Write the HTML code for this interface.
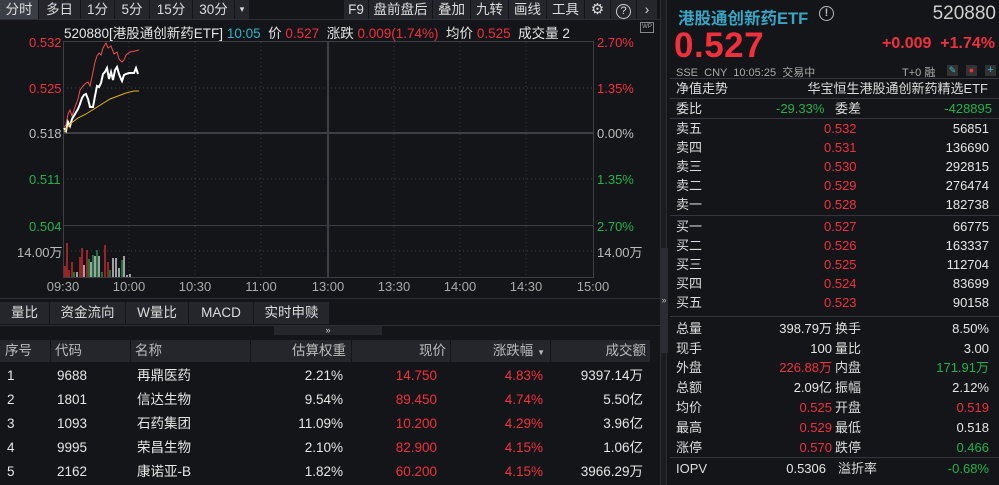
<!DOCTYPE html><html><head><meta charset="utf-8"><style>
*{margin:0;padding:0;box-sizing:border-box}
body{width:999px;height:485px;background:#141519;font-family:"Liberation Sans","Noto Sans CJK SC",sans-serif;color:#d8d8d8;position:relative;overflow:hidden;font-size:12px}
.a{position:absolute;white-space:nowrap}
.r{color:#f0313d}.g{color:#22b14c}.w{color:#e6e6e6}.gr{color:#9a9a9a}.c{color:#2bb5c8}
.tab{position:absolute;top:0;height:19px;background:#24262b;color:#ddd;font-size:13.5px;line-height:19px;text-align:center;border-right:1px solid #141519}
.bt{position:absolute;top:302px;height:22px;background:#24262b;color:#ddd;font-size:13.5px;line-height:22px;text-align:center;border-right:1px solid #141519}
.row{position:absolute;left:0;width:655px;height:24px;font-size:13.5px;line-height:24px}
.row span{position:absolute}
.wr{position:absolute;left:0;top:0;width:999px;height:485px;font-size:13px}
.wr .a{line-height:18px}
.sep{position:absolute;top:340px;width:1px;height:22px;background:#141519}
</style></head><body>
<div class="tab" style="left:0;width:39px;background:#3b3e45">分时</div>
<div class="tab" style="left:39px;width:42px">多日</div>
<div class="tab" style="left:81px;width:34px">1分</div>
<div class="tab" style="left:115px;width:35px">5分</div>
<div class="tab" style="left:150px;width:43px">15分</div>
<div class="tab" style="left:193px;width:42px">30分</div>
<div class="tab" style="left:235px;width:15px;font-size:9px">▾</div>
<div class="tab" style="left:344px;width:25px">F9</div>
<div class="tab" style="left:369px;width:64px">盘前盘后</div>
<div class="tab" style="left:433px;width:38px">叠加</div>
<div class="tab" style="left:471px;width:38px">九转</div>
<div class="tab" style="left:509px;width:38px">画线</div>
<div class="tab" style="left:547px;width:38px">工具</div>
<div class="tab" style="left:585px;width:26px;font-size:15px">⚙</div>
<div class="tab" style="left:611px;width:26px"><span style="display:inline-block;width:15px;height:15px;border:1.5px solid #ccc;border-radius:50%;font-size:11px;line-height:12px;margin-top:2px">?</span></div>
<div class="tab" style="left:637px;width:21px">›</div>
<div class="a" style="left:0;top:19px;width:660px;height:1px;background:#2c2e33"></div>
<div class="a" style="left:64px;top:22px;font-size:13.5px"><span class="w">520880[港股通创新药ETF]</span> <span class="c">10:05</span> &nbsp;<span class="w">价</span> <span class="r">0.527</span> &nbsp;<span class="w">涨跌</span> <span class="r">0.009(1.74%)</span> &nbsp;<span class="w">均价</span> <span class="r">0.525</span> &nbsp;<span class="w">成交量</span> <span class="w">2</span></div>
<div class="a" style="left:640px;top:22px;width:14px;height:11px;border:1px solid #888;font-size:6px;line-height:9px;text-align:center;color:#aaa">WP</div>
<svg class="a" style="left:0;top:0" width="660" height="300">
<g stroke="#3a3c42" stroke-dasharray="1,3" stroke-width="1">
<line x1="63" y1="88" x2="593" y2="88"/><line x1="63" y1="179" x2="593" y2="179"/><line x1="63" y1="251" x2="593" y2="251"/>
<line x1="129" y1="42" x2="129" y2="277"/><line x1="195" y1="42" x2="195" y2="277"/><line x1="261" y1="42" x2="261" y2="277"/>
<line x1="394" y1="42" x2="394" y2="277"/><line x1="460" y1="42" x2="460" y2="277"/><line x1="526" y1="42" x2="526" y2="277"/>
</g>
<g stroke="#3d3f45" stroke-width="1" fill="none">
<rect x="63.5" y="41.5" width="530" height="236"/>
<line x1="63" y1="133" x2="593" y2="133" stroke-width="2"/>
<line x1="63" y1="225.5" x2="593" y2="225.5"/>
<line x1="328" y1="42" x2="328" y2="277" stroke-width="2"/>
</g>
<polyline fill="none" stroke="#f04d4d" stroke-width="1" points="64,127 66,125 68,114 70,110 72,116 75,107 78,99 80,90 83,86 86,83 88,82 90,86 93,72 95,62 97,56 99,53 101,55 103,48 106,43 108,48 111,46 114,54 117,52 119,59 122,62 124,60 126,55 130,52 135,51 139,50"/>
<polyline fill="none" stroke="#fff" stroke-width="2" points="64,128 66,131 68,122 70,126 72,119 75,114 78,109 80,104 82,98 84,95 86,94 88,99 90,107 93,107 95,96 97,86 99,87 101,83 103,74 105,72 107,68 109,79 111,72 113,80 115,70 117,67 119,74 121,79 122,81 124,75 126,74 129,73 134,73 136,68 138,74"/>
<polyline fill="none" stroke="#e8b020" stroke-width="1" points="64,132 70,124 78,118 86,114 94,109 102,104 110,99 118,96 126,93 134,91 139,91"/>
<g stroke-width="1.2">
<line x1="65" y1="277" x2="65" y2="266" stroke="#f03030"/><line x1="67" y1="277" x2="67" y2="243" stroke="#f03030"/><line x1="69" y1="277" x2="69" y2="270" stroke="#f03030"/><line x1="72" y1="277" x2="72" y2="262" stroke="#f03030"/><line x1="74" y1="277" x2="74" y2="272" stroke="#22b14c"/><line x1="77" y1="277" x2="77" y2="272" stroke="#fff"/><line x1="80" y1="277" x2="80" y2="257" stroke="#f03030"/><line x1="82" y1="277" x2="82" y2="248" stroke="#f03030"/><line x1="84" y1="277" x2="84" y2="265" stroke="#fff"/><line x1="87" y1="277" x2="87" y2="250" stroke="#f03030"/><line x1="89" y1="277" x2="89" y2="259" stroke="#22b14c"/><line x1="91" y1="277" x2="91" y2="262" stroke="#fff"/><line x1="93" y1="277" x2="93" y2="255" stroke="#22b14c"/><line x1="95" y1="277" x2="95" y2="256" stroke="#fff"/><line x1="97" y1="277" x2="97" y2="250" stroke="#22b14c"/><line x1="99" y1="277" x2="99" y2="256" stroke="#fff"/><line x1="102" y1="277" x2="102" y2="272" stroke="#22b14c"/><line x1="105" y1="277" x2="105" y2="245" stroke="#f03030"/><line x1="108" y1="277" x2="108" y2="262" stroke="#f03030"/><line x1="110" y1="277" x2="110" y2="270" stroke="#22b14c"/><line x1="113" y1="277" x2="113" y2="258" stroke="#fff"/><line x1="116" y1="277" x2="116" y2="258" stroke="#fff"/><line x1="119" y1="277" x2="119" y2="268" stroke="#fff"/><line x1="122" y1="277" x2="122" y2="260" stroke="#22b14c"/><line x1="124" y1="277" x2="124" y2="256" stroke="#fff"/><line x1="127" y1="277" x2="127" y2="275" stroke="#fff"/><line x1="130" y1="277" x2="130" y2="274" stroke="#fff"/>
</g>
<g font-size="13" font-family="Liberation Sans, Noto Sans CJK SC, sans-serif">
<text x="29" y="47" fill="#f0313d">0.532</text><text x="29" y="93" fill="#f0313d">0.525</text><text x="29" y="138" fill="#bbb">0.518</text><text x="29" y="184" fill="#22b14c">0.511</text><text x="29" y="231" fill="#22b14c">0.504</text><text x="17" y="257" fill="#bbb">14.00万</text>
<text x="597" y="47" fill="#f0313d">2.70%</text><text x="597" y="93" fill="#f0313d">1.35%</text><text x="597" y="138" fill="#bbb">0.00%</text><text x="597" y="184" fill="#22b14c">1.35%</text><text x="597" y="231" fill="#22b14c">2.70%</text><text x="597" y="257" fill="#bbb">14.00万</text>
<g fill="#aaa" text-anchor="middle"><text x="63" y="291">09:30</text><text x="129" y="291">10:00</text><text x="195" y="291">10:30</text><text x="261" y="291">11:00</text><text x="328" y="291">13:00</text><text x="394" y="291">13:30</text><text x="460" y="291">14:00</text><text x="526" y="291">14:30</text><text x="593" y="291">15:00</text></g>
</g>
</svg>
<div class="a" style="left:0;top:298px;width:660px;height:1px;background:#2c2e33"></div>
<div class="bt" style="left:0;width:50px">量比</div>
<div class="bt" style="left:50px;width:76px">资金流向</div>
<div class="bt" style="left:126px;width:63px">W量比</div>
<div class="bt" style="left:189px;width:65px">MACD</div>
<div class="bt" style="left:254px;width:76px">实时申赎</div>
<div class="a" style="left:0;top:325px;width:660px;height:1px;background:#2c2e33"></div>
<div class="a" style="left:274px;top:326px;width:108px;height:9px;background:#24262b;color:#ccc;font-size:9px;line-height:9px;text-align:center">»</div>
<div class="row" style="top:340px;height:22px;width:650px;line-height:22px;background:#24262b;color:#bbb;font-size:13.5px">
<span style="left:5px">序号</span><span style="left:55px">代码</span><span style="left:135px">名称</span><span style="right:304px">估算权重</span><span style="right:204px">现价</span><span style="right:105px">涨跌幅 <span style="position:static;font-size:8px">▼</span></span><span style="right:4px">成交额</span>
</div>
<div class="sep" style="left:50px"></div><div class="sep" style="left:130px"></div><div class="sep" style="left:250px"></div><div class="sep" style="left:351px"></div><div class="sep" style="left:450px"></div><div class="sep" style="left:550px"></div>
<div class="row w" style="top:364px"><span style="left:7px">1</span><span style="left:57px">9688</span><span style="left:137px">再鼎医药</span><span style="right:312px">2.21%</span><span class="r" style="right:218px">14.750</span><span class="r" style="right:112px">4.83%</span><span style="right:12px">9397.14万</span></div>
<div class="row w" style="top:388px"><span style="left:7px">2</span><span style="left:57px">1801</span><span style="left:137px">信达生物</span><span style="right:312px">9.54%</span><span class="r" style="right:218px">89.450</span><span class="r" style="right:112px">4.74%</span><span style="right:12px">5.50亿</span></div>
<div class="row w" style="top:412px"><span style="left:7px">3</span><span style="left:57px">1093</span><span style="left:137px">石药集团</span><span style="right:312px">11.09%</span><span class="r" style="right:218px">10.200</span><span class="r" style="right:112px">4.29%</span><span style="right:12px">3.96亿</span></div>
<div class="row w" style="top:436px"><span style="left:7px">4</span><span style="left:57px">9995</span><span style="left:137px">荣昌生物</span><span style="right:312px">2.10%</span><span class="r" style="right:218px">82.900</span><span class="r" style="right:112px">4.15%</span><span style="right:12px">1.06亿</span></div>
<div class="row w" style="top:460px"><span style="left:7px">5</span><span style="left:57px">2162</span><span style="left:137px">康诺亚-B</span><span style="right:312px">1.82%</span><span class="r" style="right:218px">60.200</span><span class="r" style="right:112px">4.15%</span><span style="right:12px">3966.29万</span></div>
<div class="a" style="left:660px;top:0;width:7px;height:485px;background:#1b1c20;border-left:1px solid #2c2e33;border-right:1px solid #2c2e33"></div>
<div class="a" style="left:660px;top:248px;width:8px;height:105px;background:#2a2c31;color:#bbb;font-size:9px;line-height:105px;text-align:center">»</div>
<div class="a" style="left:678px;top:5px;font-size:16.5px;font-weight:bold;color:#37a6c4">港股通创新药ETF</div>
<div class="a" style="left:819px;top:6px;width:15px;height:15px;border:1.5px solid #bbb;border-radius:50%;font-size:11px;line-height:12px;text-align:center;color:#bbb;font-weight:bold">!</div>
<div class="a" style="right:3px;top:3px;font-size:19px;color:#cfcfcf">520880</div>
<div class="a" style="left:674px;top:26px;font-size:35px;font-weight:bold;color:#f0313d;letter-spacing:0.5px">0.527</div>
<div class="a r" style="right:4px;top:35px;font-size:16px;font-weight:bold">+0.009 &nbsp;+1.74%</div>
<div class="a gr" style="left:676px;top:64px;font-size:11px;color:#aaa">SSE &nbsp;CNY &nbsp;10:05:25 &nbsp;交易中</div>
<div class="a" style="left:902px;top:64px;font-size:11px;color:#aaa">T+0 融</div>
<div class="a" style="left:947px;top:65px;width:11px;height:11px;background:#333;color:#3fb6d6;font-size:9px;line-height:11px;text-align:center">✎</div>
<div class="a" style="left:966px;top:65px;width:11px;height:11px;background:#333;color:#f0313d;font-size:9px;line-height:11px;text-align:center">●</div>
<div class="a" style="left:985px;top:65px;width:11px;height:11px;background:#333;color:#3fb6d6;font-size:11px;line-height:11px;text-align:center">+</div>
<div class="a" style="left:670px;top:78px;width:329px;height:1px;background:#34363b"></div>
<div class="wr">
<div class="a" style="left:676px;top:80px;color:#ddd">净值走势</div>
<div class="a" style="right:11px;top:80px;color:#ddd">华宝恒生港股通创新药精选ETF</div>
<div class="a" style="left:676px;top:100px;color:#ddd">委比</div>
<div class="a g" style="left:776px;top:100px">-29.33%</div>
<div class="a" style="left:835px;top:100px;color:#ddd">委差</div>
<div class="a g" style="right:7px;top:100px">-428895</div>
</div>
<div class="a" style="left:670px;top:98px;width:329px;height:1px;background:#34363b"></div>
<div class="a" style="left:670px;top:118px;width:329px;height:1px;background:#34363b"></div>
<div class="wr">
<div class="a" style="left:676px;top:120px;color:#ddd">卖五</div><div class="a r" style="left:824px;top:120px">0.532</div><div class="a w" style="right:10px;top:120px">56851</div>
<div class="a" style="left:676px;top:139px;color:#ddd">卖四</div><div class="a r" style="left:824px;top:139px">0.531</div><div class="a w" style="right:10px;top:139px">136690</div>
<div class="a" style="left:676px;top:158px;color:#ddd">卖三</div><div class="a r" style="left:824px;top:158px">0.530</div><div class="a w" style="right:10px;top:158px">292815</div>
<div class="a" style="left:676px;top:177px;color:#ddd">卖二</div><div class="a r" style="left:824px;top:177px">0.529</div><div class="a w" style="right:10px;top:177px">276474</div>
<div class="a" style="left:676px;top:196px;color:#ddd">卖一</div><div class="a r" style="left:824px;top:196px">0.528</div><div class="a w" style="right:10px;top:196px">182738</div>
</div>
<div class="a" style="left:670px;top:215px;width:329px;height:1px;background:#34363b"></div>
<div class="wr">
<div class="a" style="left:676px;top:218px;color:#ddd">买一</div><div class="a r" style="left:824px;top:218px">0.527</div><div class="a w" style="right:10px;top:218px">66775</div>
<div class="a" style="left:676px;top:237px;color:#ddd">买二</div><div class="a r" style="left:824px;top:237px">0.526</div><div class="a w" style="right:10px;top:237px">163337</div>
<div class="a" style="left:676px;top:256px;color:#ddd">买三</div><div class="a r" style="left:824px;top:256px">0.525</div><div class="a w" style="right:10px;top:256px">112704</div>
<div class="a" style="left:676px;top:275px;color:#ddd">买四</div><div class="a r" style="left:824px;top:275px">0.524</div><div class="a w" style="right:10px;top:275px">83699</div>
<div class="a" style="left:676px;top:294px;color:#ddd">买五</div><div class="a r" style="left:824px;top:294px">0.523</div><div class="a w" style="right:10px;top:294px">90158</div>
</div>
<div class="a" style="left:670px;top:316px;width:329px;height:1px;background:#34363b"></div>
<div class="wr">
<div class="a" style="left:676px;top:320px;color:#ddd">总量</div><div class="a w" style="right:167px;top:320px">398.79万</div><div class="a" style="left:835px;top:320px;color:#ddd">换手</div><div class="a w" style="right:10px;top:320px">8.50%</div>
<div class="a" style="left:676px;top:340px;color:#ddd">现手</div><div class="a w" style="right:167px;top:340px">100</div><div class="a" style="left:835px;top:340px;color:#ddd">量比</div><div class="a w" style="right:10px;top:340px">3.00</div>
<div class="a" style="left:676px;top:359px;color:#ddd">外盘</div><div class="a r" style="right:167px;top:359px">226.88万</div><div class="a" style="left:835px;top:359px;color:#ddd">内盘</div><div class="a g" style="right:10px;top:359px">171.91万</div>
<div class="a" style="left:676px;top:379px;color:#ddd">总额</div><div class="a w" style="right:167px;top:379px">2.09亿</div><div class="a" style="left:835px;top:379px;color:#ddd">振幅</div><div class="a w" style="right:10px;top:379px">2.12%</div>
<div class="a" style="left:676px;top:399px;color:#ddd">均价</div><div class="a r" style="right:167px;top:399px">0.525</div><div class="a" style="left:835px;top:399px;color:#ddd">开盘</div><div class="a r" style="right:10px;top:399px">0.519</div>
<div class="a" style="left:676px;top:419px;color:#ddd">最高</div><div class="a r" style="right:167px;top:419px">0.529</div><div class="a" style="left:835px;top:419px;color:#ddd">最低</div><div class="a w" style="right:10px;top:419px">0.518</div>
<div class="a" style="left:676px;top:439px;color:#ddd">涨停</div><div class="a r" style="right:167px;top:439px">0.570</div><div class="a" style="left:835px;top:439px;color:#ddd">跌停</div><div class="a g" style="right:10px;top:439px">0.466</div>
</div>
<div class="a" style="left:670px;top:457px;width:329px;height:1px;background:#34363b"></div>
<div class="wr">
<div class="a" style="left:676px;top:460px;color:#ddd">IOPV</div><div class="a w" style="right:173px;top:460px">0.5306</div><div class="a" style="left:838px;top:460px;color:#ddd">溢折率</div><div class="a g" style="right:10px;top:460px">-0.68%</div>
</div>
</body></html>
